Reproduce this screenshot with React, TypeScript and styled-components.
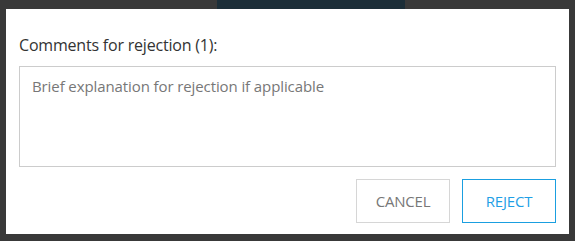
import React from "react";
import styled, { createGlobalStyle } from "styled-components";

const Global = createGlobalStyle`
  html, body { margin: 0; padding: 0; background: #393939; }
  body { font-family: "Open Sans", "Noto Sans", sans-serif; }
`;

const Page = styled.div`
  width: 575px;
  height: 241px;
  background: #393939;
  display: flex;
  flex-direction: column;
`;

const TopStrip = styled.div`
  height: 9px;
  display: flex;
  padding-left: 217px;
`;

const TealBlock = styled.div`
  width: 188px;
  background: #1c2e38;
`;

const Dialog = styled.div`
  margin: 0 6px;
  height: 225px;
  background: #ffffff;
  box-sizing: border-box;
  padding: 25px 13px 11px 13px;
  display: flex;
  flex-direction: column;
`;

const Title = styled.div`
  font-size: 16px;
  line-height: 22px;
  color: #333333;
  letter-spacing: -0.2px;
  margin-bottom: 10px;
`;

const Comment = styled.textarea`
  box-sizing: border-box;
  width: 537px;
  height: 102px;
  border: 1px solid #cccccc;
  padding: 9px 12px;
  margin: 0;
  resize: none;
  font-family: "Open Sans", "Noto Sans", sans-serif;
  font-size: 15px;
  letter-spacing: -0.1px;
  line-height: 20px;
  color: #333;
  outline: none;
  &::placeholder { color: #777777; opacity: 1; }
`;

const Actions = styled.div`
  margin-top: 12px;
  display: flex;
  justify-content: flex-end;
  gap: 12px;
`;

const Button = styled.button<{ $primary?: boolean }>`
  box-sizing: border-box;
  width: 94px;
  height: 44px;
  background: #ffffff;
  border: 1px solid ${(p) => (p.$primary ? "#1a9fe0" : "#d6d6d6")};
  color: ${(p) => (p.$primary ? "#1f9fe6" : "#777777")};
  font-family: "Open Sans", "Noto Sans", sans-serif;
  font-size: 15px;
  letter-spacing: -0.2px;
  padding: 0;
  cursor: pointer;
`;

export default function App() {
  return (
    <>
      <Global />
      <Page>
        <TopStrip>
          <TealBlock />
        </TopStrip>
        <Dialog>
          <Title>Comments for rejection (1):</Title>
          <Comment placeholder="Brief explanation for rejection if applicable" />
          <Actions>
            <Button>CANCEL</Button>
            <Button $primary>REJECT</Button>
          </Actions>
        </Dialog>
      </Page>
    </>
  );
}
